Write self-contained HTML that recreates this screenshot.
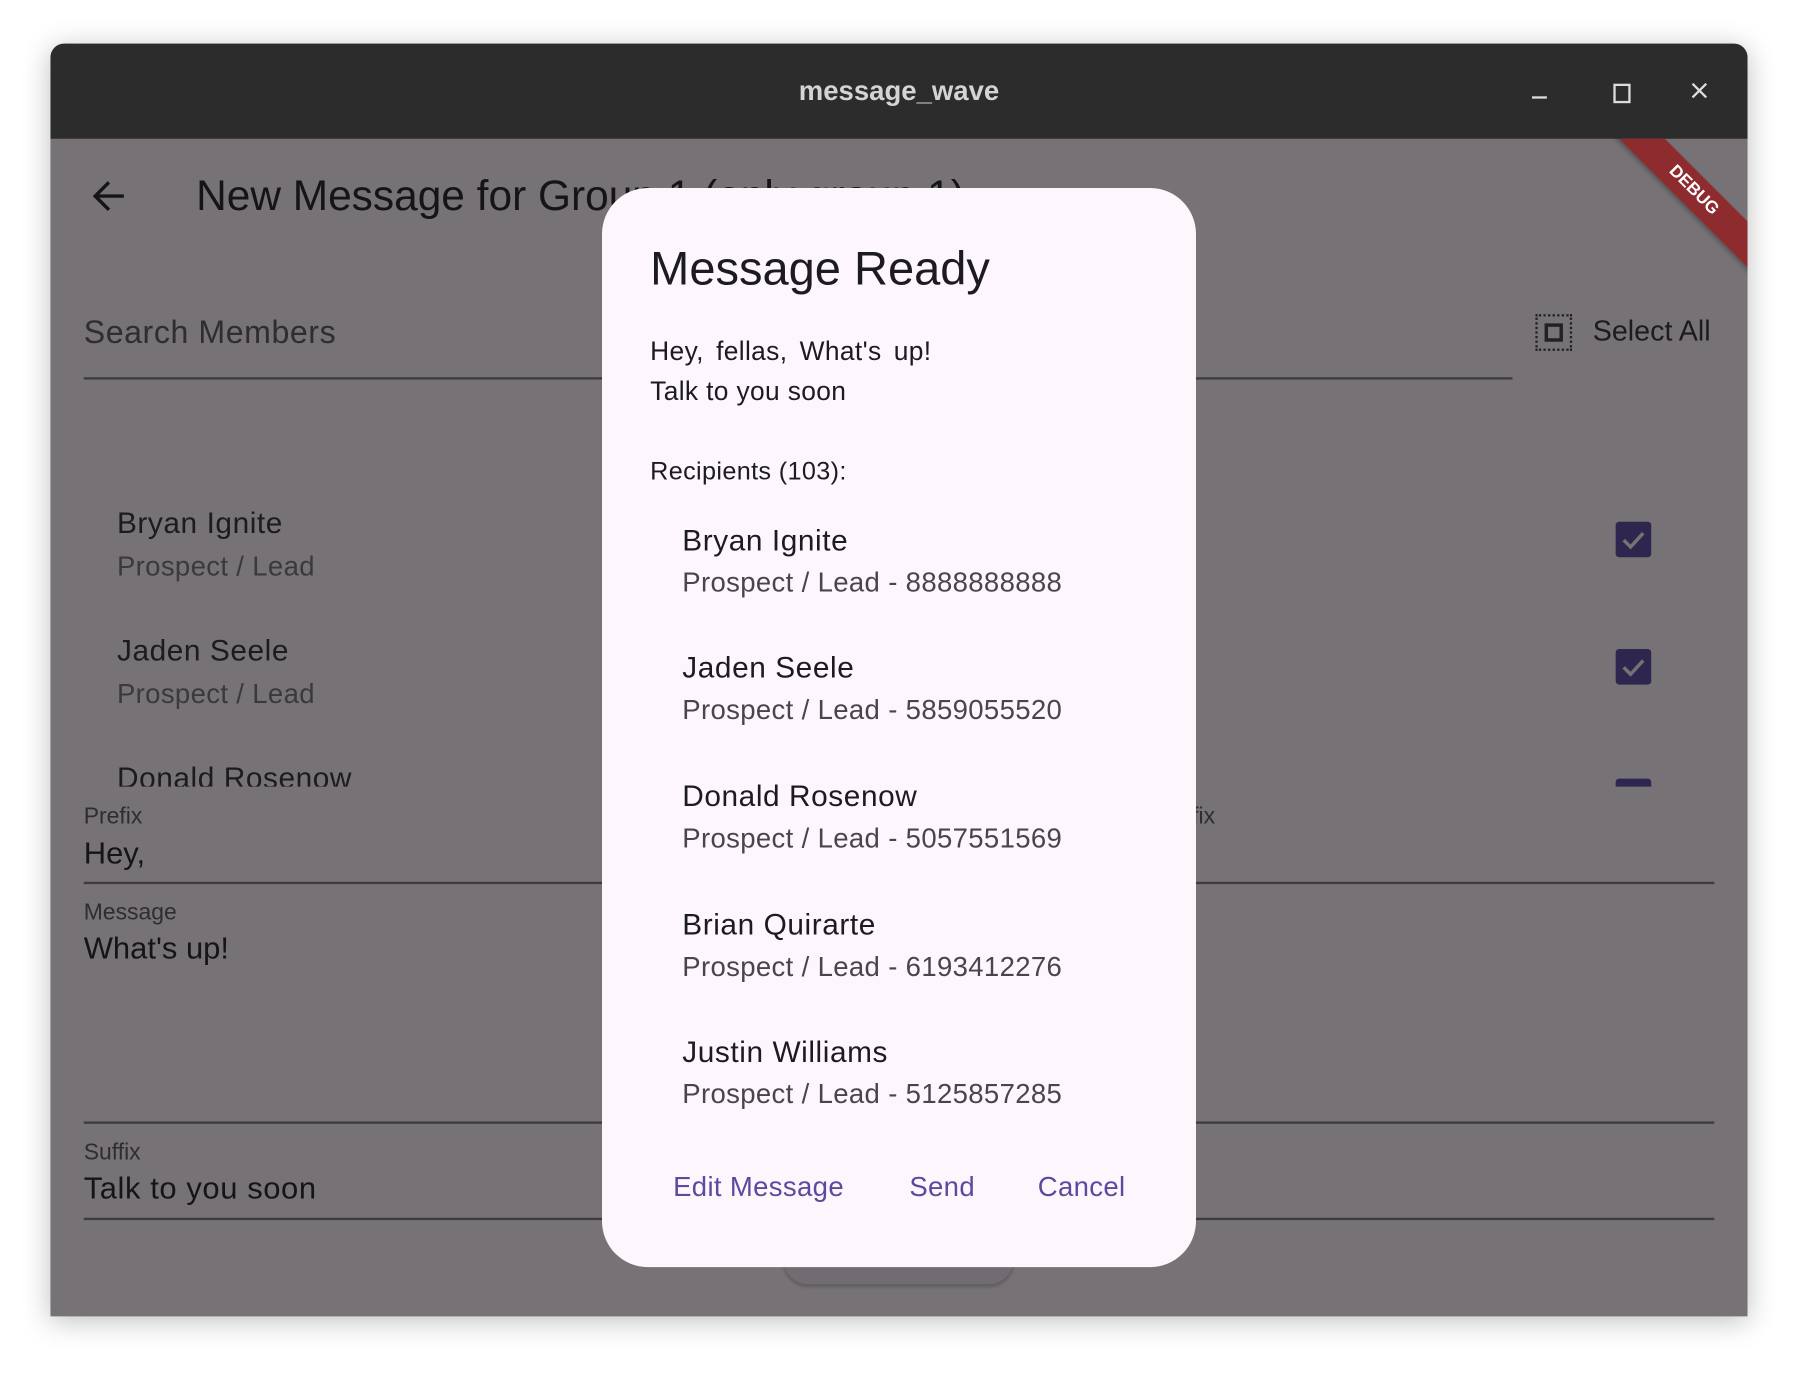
<!DOCTYPE html>
<html><head><meta charset="utf-8"><style>
html,body{margin:0;padding:0;background:#fff;width:1798px;height:1374px;overflow:hidden}
#s{position:absolute;left:0;top:0;width:1568px;height:1198px;transform:scale(1.14668);transform-origin:0 0;font-family:"Liberation Sans",sans-serif}
.a{position:absolute;white-space:nowrap;line-height:1}
#win{position:absolute;left:44px;top:38px;width:1480px;height:1110px;border-radius:12px 12px 0 0;overflow:hidden;box-shadow:0 4px 24px rgba(0,0,0,.25);background:#767276}
#tb{position:absolute;left:0;top:0;width:1480px;height:83px;background:#2c2c2c}
.ln{position:absolute;height:2px;background:#3d3b3e}
.cb{position:absolute;width:31px;height:31px;background:#2f2650;border-radius:3px}
.nm{font-size:26px;color:#1c1b1f;letter-spacing:.5px}
.sb{font-size:24px;color:#49454f;letter-spacing:.3px}
.btn{font-size:24px;color:#5b4a9e;letter-spacing:.3px}
</style></head><body><div id="s">
<div id="win">
<div id="tb">
<div class="a" style="left:0;width:1480px;text-align:center;top:30px;font-size:24px;font-weight:bold;color:#d4d4d4">message_wave</div>
<div class="a" style="left:1292px;top:46px;width:13px;height:2px;background:#ddd"></div>
<div class="a" style="left:1363px;top:35px;width:11px;height:13px;border:2px solid #ddd"></div>
<svg class="a" style="left:1431px;top:34px" width="14" height="14"><path d="M1 1L13 13M13 1L1 13" stroke="#ddd" stroke-width="2"/></svg>
</div>
<div class="a" style="left:0;top:83px;width:1480px;height:1027px;overflow:hidden">
<div class="a" style="left:1338px;top:31px;width:190px;height:28px;background:#8e2b2f;transform:rotate(45deg);transform-origin:50% 50%;color:#fff;font-weight:bold;font-size:15px;text-align:center;line-height:28px;box-shadow:0 2px 4px rgba(0,0,0,.3)">DEBUG</div>
</div>
<svg class="a" style="left:36px;top:118px" width="30" height="30"><path d="M28 15H4M15 3L3 15l12 12" stroke="#151416" stroke-width="3" fill="none"/></svg>
<div class="a" style="left:127px;top:114px;font-size:37px;color:#151416">New Message for Group 1 (only group 1)</div>
<div class="a" style="left:29px;top:238px;font-size:28px;color:#2f2d30;letter-spacing:.5px">Search Members</div>
<div class="ln" style="left:29px;top:291px;width:1246px"></div>
<div class="a" style="left:1295px;top:236px;width:28px;height:28px;border:2px dotted #222"></div>
<div class="a" style="left:1303px;top:244px;border:3px solid #222;box-sizing:border-box;width:16px;height:16px"></div>
<div class="a" style="left:1345px;top:239px;font-size:25px;color:#1c1b1f">Select All</div>
<div class="a nm" style="left:58px;top:405px">Bryan Ignite</div>
<div class="a sb" style="left:58px;top:445px;color:#3b393c">Prospect / Lead</div>
<div class="a nm" style="left:58px;top:516px">Jaden Seele</div>
<div class="a sb" style="left:58px;top:556px;color:#3b393c">Prospect / Lead</div>
<div class="a" style="left:0;top:620px;width:1480px;height:28px;overflow:hidden"><div class="a nm" style="left:58px;top:7px">Donald Rosenow</div><div class="cb" style="left:1365px;top:21px"></div></div>
<div class="cb" style="left:1365px;top:417px"><svg width="31" height="31"><path d="M7 16l6 6 11-12" stroke="#767276" stroke-width="3" fill="none"/></svg></div>
<div class="cb" style="left:1365px;top:528px"><svg width="31" height="31"><path d="M7 16l6 6 11-12" stroke="#767276" stroke-width="3" fill="none"/></svg></div>
<div class="a" style="left:29px;top:664px;font-size:20px;color:#2f2d30">Prefix</div>
<div class="a" style="left:29px;top:693px;font-size:27px;color:#151416">Hey,</div>
<div class="a" style="left:966px;top:664px;font-size:20px;color:#2f2d30">Suffix</div>
<div class="ln" style="left:29px;top:731px;width:1422px"></div>
<div class="a" style="left:29px;top:748px;font-size:20px;color:#2f2d30">Message</div>
<div class="a" style="left:29px;top:776px;font-size:27px;color:#151416">What's up!</div>
<div class="ln" style="left:29px;top:940px;width:1422px"></div>
<div class="a" style="left:29px;top:957px;font-size:20px;color:#2f2d30">Suffix</div>
<div class="a" style="left:29px;top:985px;font-size:27px;color:#151416;letter-spacing:.5px">Talk to you soon</div>
<div class="ln" style="left:29px;top:1024px;width:1422px"></div>
<div class="a" style="left:639px;top:1040px;width:201px;height:42px;border-radius:0 0 22px 22px;background:#706c71;box-shadow:0 2px 3px rgba(0,0,0,.2)"></div>
</div>
<div class="a" style="left:525px;top:164px;width:518px;height:941px;background:#fdf7fd;border-radius:40px"></div>
<div class="a" style="left:567px;top:214px;font-size:41px;color:#1c1b1f">Message Ready</div>
<div class="a" style="left:567px;top:295px;font-size:23px;color:#1c1b1f;word-spacing:4px;letter-spacing:.3px">Hey, fellas, What's up!</div>
<div class="a" style="left:567px;top:330px;font-size:23px;color:#1c1b1f;letter-spacing:.3px">Talk to you soon</div>
<div class="a" style="left:567px;top:400px;font-size:22px;color:#1c1b1f;letter-spacing:.3px">Recipients (103):</div>
<div class="a nm" style="left:595px;top:458px">Bryan Ignite</div>
<div class="a sb" style="left:595px;top:497px">Prospect / Lead - 8888888888</div>
<div class="a nm" style="left:595px;top:569px">Jaden Seele</div>
<div class="a sb" style="left:595px;top:608px">Prospect / Lead - 5859055520</div>
<div class="a nm" style="left:595px;top:681px">Donald Rosenow</div>
<div class="a sb" style="left:595px;top:720px">Prospect / Lead - 5057551569</div>
<div class="a nm" style="left:595px;top:793px">Brian Quirarte</div>
<div class="a sb" style="left:595px;top:832px">Prospect / Lead - 6193412276</div>
<div class="a nm" style="left:595px;top:904px">Justin Williams</div>
<div class="a sb" style="left:595px;top:943px">Prospect / Lead - 5125857285</div>
<div class="a btn" style="left:587px;top:1024px">Edit Message</div>
<div class="a btn" style="left:793px;top:1024px">Send</div>
<div class="a btn" style="left:905px;top:1024px">Cancel</div>
</div></body></html>
